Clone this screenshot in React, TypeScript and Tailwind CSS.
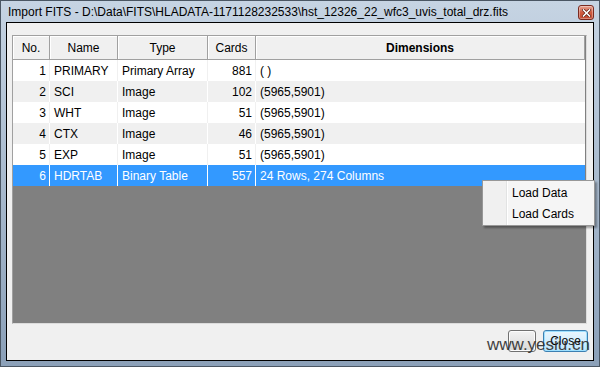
import React from "react";

const rows = [
  { no: 1, name: "PRIMARY", type: "Primary Array", cards: 881, dim: "( )" },
  { no: 2, name: "SCI", type: "Image", cards: 102, dim: "(5965,5901)" },
  { no: 3, name: "WHT", type: "Image", cards: 51, dim: "(5965,5901)" },
  { no: 4, name: "CTX", type: "Image", cards: 46, dim: "(5965,5901)" },
  { no: 5, name: "EXP", type: "Image", cards: 51, dim: "(5965,5901)" },
  { no: 6, name: "HDRTAB", type: "Binary Table", cards: 557, dim: "24 Rows, 274 Columns" },
];

function HeaderCell({ w, children, bold }: { w: string; children: React.ReactNode; bold?: boolean }) {
  return (
    <div
      className={`${w} h-full flex items-center justify-center border-r border-b border-[#a0a0a0] shadow-[inset_1px_1px_0_#ffffff] ${bold ? "font-bold" : ""}`}
    >
      {children}
    </div>
  );
}

export default function App() {
  return (
    <div
      className="relative w-[600px] h-[367px] overflow-hidden text-[12px] text-black"
      style={{ fontFamily: '"Liberation Sans", Arial, sans-serif' }}
    >
      <div className="w-full h-full flex flex-col border border-[#4a5663] bg-gradient-to-b from-[#c6d4e3] to-[#8ba0b8]">
        {/* Title bar */}
        <div className="h-[21px] flex items-start pl-[7px] pr-[5px]">
          <span className="pt-[5px] leading-none whitespace-nowrap">
            Import FITS - D:\Data\FITS\HLADATA-1171128232533\hst_12326_22_wfc3_uvis_total_drz.fits
          </span>
          <div className="ml-auto mt-[4px] w-[16px] h-[15px] rounded-[3px] border border-[#7a2a20] bg-gradient-to-b from-[#e8a493] via-[#cf5a40] to-[#c24a32] flex items-center justify-center shadow-[inset_0_0_0_1px_rgba(255,255,255,0.35)]">
            <svg width="9" height="8" viewBox="0 0 9 8">
              <path d="M1.5 1 L7.5 7 M7.5 1 L1.5 7" stroke="#5a1a10" strokeWidth="3" strokeLinecap="square" />
              <path d="M1.5 1 L7.5 7 M7.5 1 L1.5 7" stroke="#ffffff" strokeWidth="1.6" strokeLinecap="square" />
            </svg>
          </div>
        </div>

        {/* Client area */}
        <div className="flex-1 mx-[5px] mb-[5px] border border-black bg-[#f0f0f0] flex flex-col">
          <div className="pl-[5px] pt-[12px]">
            <div className="w-[575px] h-[289px] border border-[#a0a0a0] border-b-[#dcdcdc] border-r-[#dcdcdc] bg-[#808080] flex flex-col">
              <div className="w-[572px] h-[24px] flex bg-[#f0f0f0]">
                <HeaderCell w="w-[37px]">No.</HeaderCell>
                <HeaderCell w="w-[68px]">Name</HeaderCell>
                <HeaderCell w="w-[90px]">Type</HeaderCell>
                <HeaderCell w="w-[48px]">Cards</HeaderCell>
                <HeaderCell w="w-[329px]" bold>
                  Dimensions
                </HeaderCell>
              </div>
              {rows.map((r, i) => {
                const sel = r.no === 6;
                const bg = sel ? "bg-[#3399ff] text-white" : i % 2 === 0 ? "bg-white" : "bg-[#f0f0f0]";
                const line = sel ? "border-[#ffffff]" : i % 2 === 0 ? "border-[#f0f0f0]" : "border-[#ffffff]";
                return (
                  <div key={r.no} className={`w-[572px] h-[21px] flex ${bg}`}>
                    <div className={`w-[37px] h-full border-r ${line} flex items-center justify-end pr-[3px]`}>{r.no}</div>
                    <div className={`w-[68px] h-full border-r ${line} flex items-center pl-[4px]`}>{r.name}</div>
                    <div className={`w-[90px] h-full border-r ${line} flex items-center pl-[4px]`}>{r.type}</div>
                    <div className={`w-[48px] h-full border-r ${line} flex items-center justify-end pr-[3px]`}>{r.cards}</div>
                    <div className="w-[329px] h-full flex items-center pl-[4px]">{r.dim}</div>
                  </div>
                );
              })}
            </div>
          </div>

          {/* Buttons */}
          <div className="flex justify-end gap-[7px] pr-[5px] pt-[6px]">
            <div className="w-[28px] h-[22px] rounded-[3px] border border-[#707070] bg-gradient-to-b from-[#f2f2f2] to-[#d8d8d8] shadow-[inset_0_0_0_1px_#fcfcfc]" />
            <div className="w-[45px] h-[22px] rounded-[3px] border border-[#3c7fb1] bg-gradient-to-b from-[#eaf6fd] to-[#bee6fd] shadow-[inset_0_0_0_1px_#9de0ff] flex items-center justify-center">
              Close
            </div>
          </div>
        </div>
      </div>

      {/* Context menu */}
      <div className="absolute left-[482px] top-[180px] w-[113px] h-[46px] border border-[#979797] bg-[#f5f5f5] shadow-[2px_2px_2px_rgba(0,0,0,0.35)] flex">
        <div className="w-[24px] h-full bg-[#f0f0f0] border-r border-[#e2e3e3] shadow-[1px_0_0_#ffffff]" />
        <div className="flex flex-col pt-[1px]">
          <div className="h-[22px] flex items-center pl-[5px]">Load Data</div>
          <div className="h-[22px] flex items-center pl-[5px]">Load Cards</div>
        </div>
      </div>

      {/* Watermark */}
      <div
        className="absolute left-[487px] top-[336px] text-[17px] leading-none text-[#2e2e2e] opacity-90 whitespace-nowrap"
        style={{ fontFamily: '"Liberation Sans", Arial, sans-serif' }}
      >
        www.yesiu.cn
      </div>
    </div>
  );
}
